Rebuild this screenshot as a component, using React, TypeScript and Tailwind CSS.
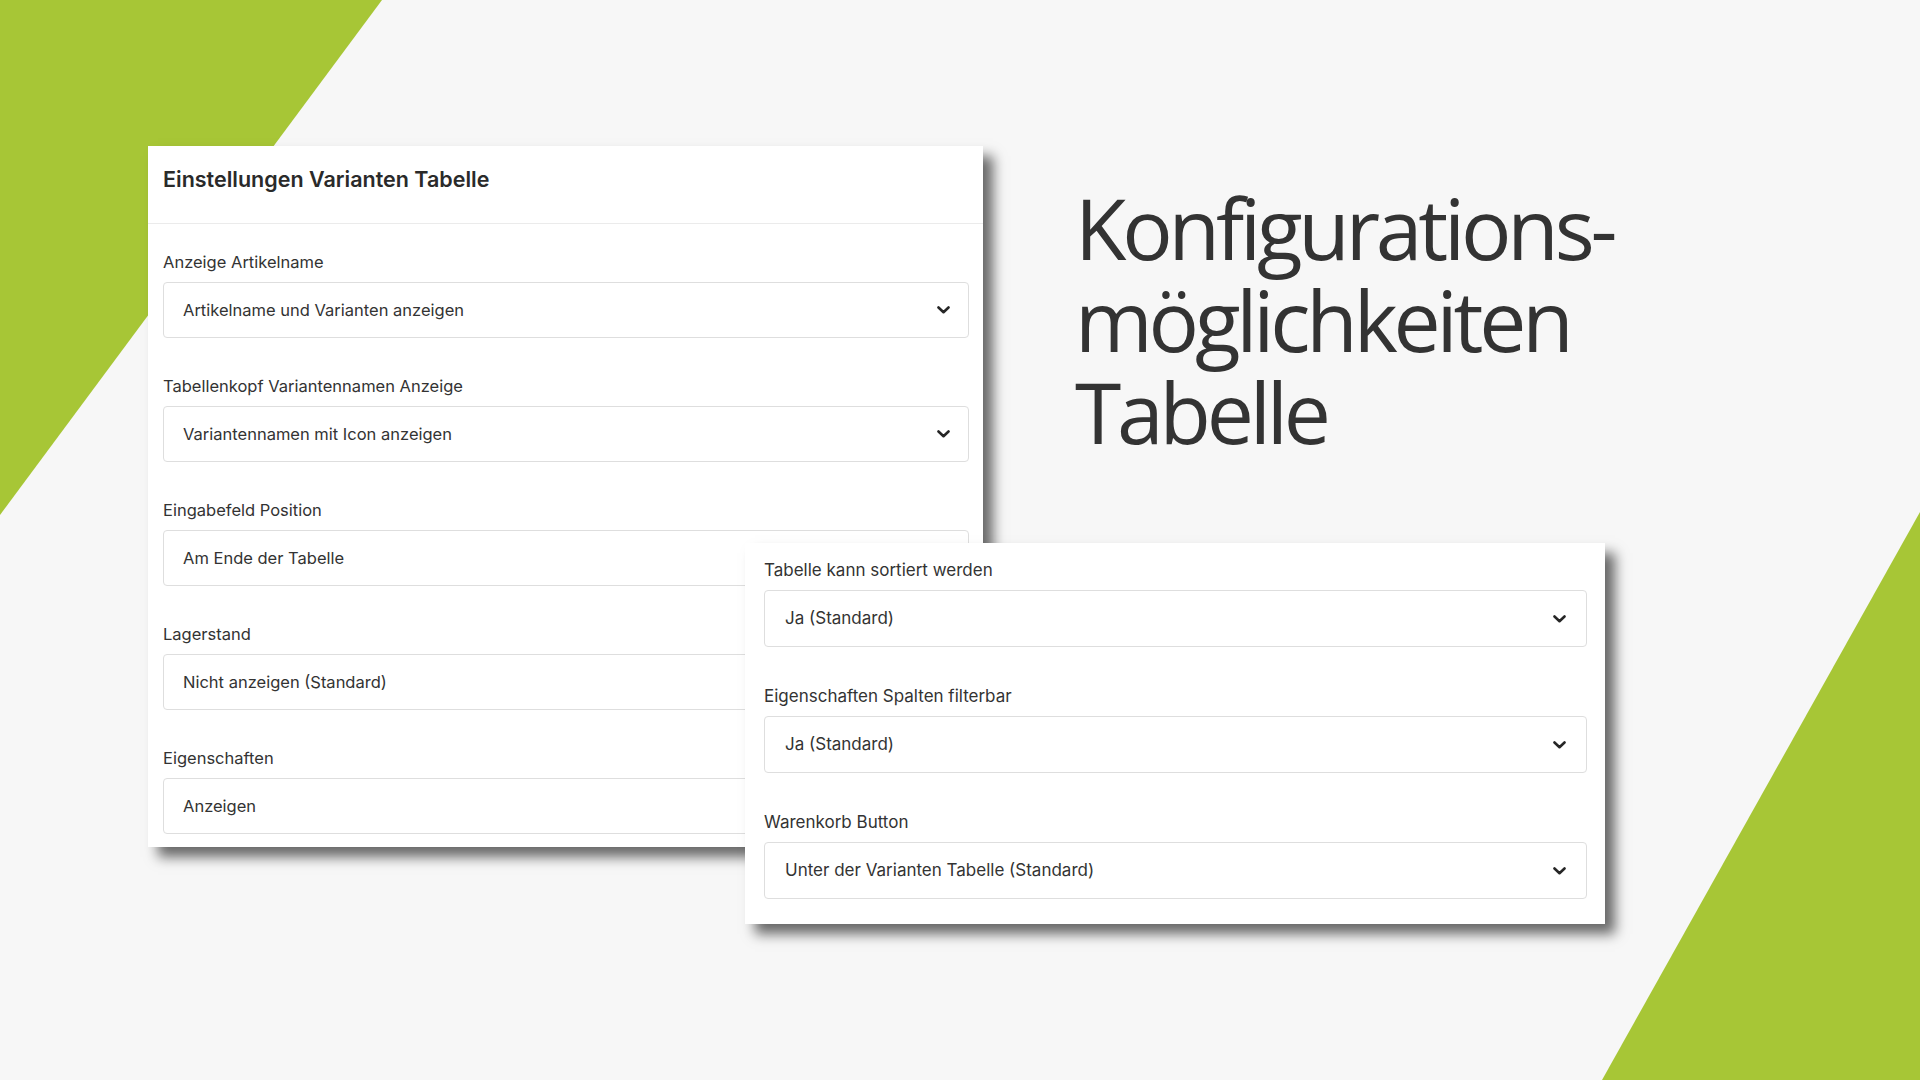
import React from 'react';

type Field = { label: string; value: string };

const LEFT_FIELDS: Field[] = [
  { label: 'Anzeige Artikelname', value: 'Artikelname und Varianten anzeigen' },
  { label: 'Tabellenkopf Variantennamen Anzeige', value: 'Variantennamen mit Icon anzeigen' },
  { label: 'Eingabefeld Position', value: 'Am Ende der Tabelle' },
  { label: 'Lagerstand', value: 'Nicht anzeigen (Standard)' },
  { label: 'Eigenschaften', value: 'Anzeigen' },
];

const RIGHT_FIELDS: Field[] = [
  { label: 'Tabelle kann sortiert werden', value: 'Ja (Standard)' },
  { label: 'Eigenschaften Spalten filterbar', value: 'Ja (Standard)' },
  { label: 'Warenkorb Button', value: 'Unter der Varianten Tabelle (Standard)' },
];

const Chevron = () => (
  <svg width="13" height="8" viewBox="0 0 13 8" fill="none">
    <polyline points="1.5,1.5 6.5,6.2 11.5,1.5" stroke="#262626" strokeWidth="2.6" strokeLinecap="round" strokeLinejoin="round" />
  </svg>
);

// one labelled select row, as in the shop settings form
const SelectField = ({ field, large }: { field: Field; large?: boolean }) => (
  <div className="flex flex-col">
    <label className={`h-6 leading-6 text-[#333] ${large ? 'text-[17px]' : 'text-[16.5px]'}`}>{field.label}</label>
    <div
      className={`mt-2 flex items-center justify-between rounded-[4px] border border-[#dedede] bg-white ${
        large ? 'h-[57px] pl-5 pr-[20px]' : 'h-14 pl-[19px] pr-[18px]'
      }`}
    >
      <span className={`text-[#333] ${large ? 'text-[17px]' : 'text-[16.5px]'}`}>{field.value}</span>
      <Chevron />
    </div>
  </div>
);

export default function App() {
  return (
    <div className="relative w-[1920px] h-[1080px] overflow-hidden bg-[#f7f7f7] font-['Inter',sans-serif]">
      {/* green corner shapes */}
      <svg className="absolute inset-0" width="1920" height="1080" viewBox="0 0 1920 1080">
        <polygon points="0,0 382,0 0,515" fill="#a7c636" />
        <polygon points="1920,512 1920,1080 1602,1080" fill="#a7c636" />
      </svg>

      <div className="relative flex items-start pl-[148px] pt-[146px]">
        {/* settings card */}
        <div className="w-[835px] h-[701px] bg-white shadow-[10px_10px_12px_rgba(0,0,0,0.58)]">
          <div className="h-[78px] border-b border-[#ebebeb] pl-[15px] pt-[19px]">
            <h2 className="text-[21.5px] leading-7 font-semibold text-[#2a2a2a]">Einstellungen Varianten Tabelle</h2>
          </div>
          <div className="flex flex-col gap-9 pl-[15px] pr-[14px] pt-[26px]">
            {LEFT_FIELDS.map((f) => (
              <SelectField key={f.label} field={f} />
            ))}
          </div>
        </div>

        <div className="ml-[92px] mt-[36px] font-['Open_Sans',sans-serif] text-[84px] leading-[92px] tracking-[-0.05em] text-[#333] font-normal">
          <div>Konfigurations-</div>
          <div>möglichkeiten</div>
          <div>Tabelle</div>
        </div>
      </div>

      {/* second card laid over the first */}
      <div className="absolute left-[745px] top-[543px] w-[860px] h-[381px] bg-white shadow-[10px_10px_12px_rgba(0,0,0,0.58)]">
        <div className="flex flex-col gap-[37px] pl-[19px] pr-[18px] pt-[15px]">
          {RIGHT_FIELDS.map((f) => (
            <SelectField key={f.label} field={f} large />
          ))}
        </div>
      </div>
    </div>
  );
}
